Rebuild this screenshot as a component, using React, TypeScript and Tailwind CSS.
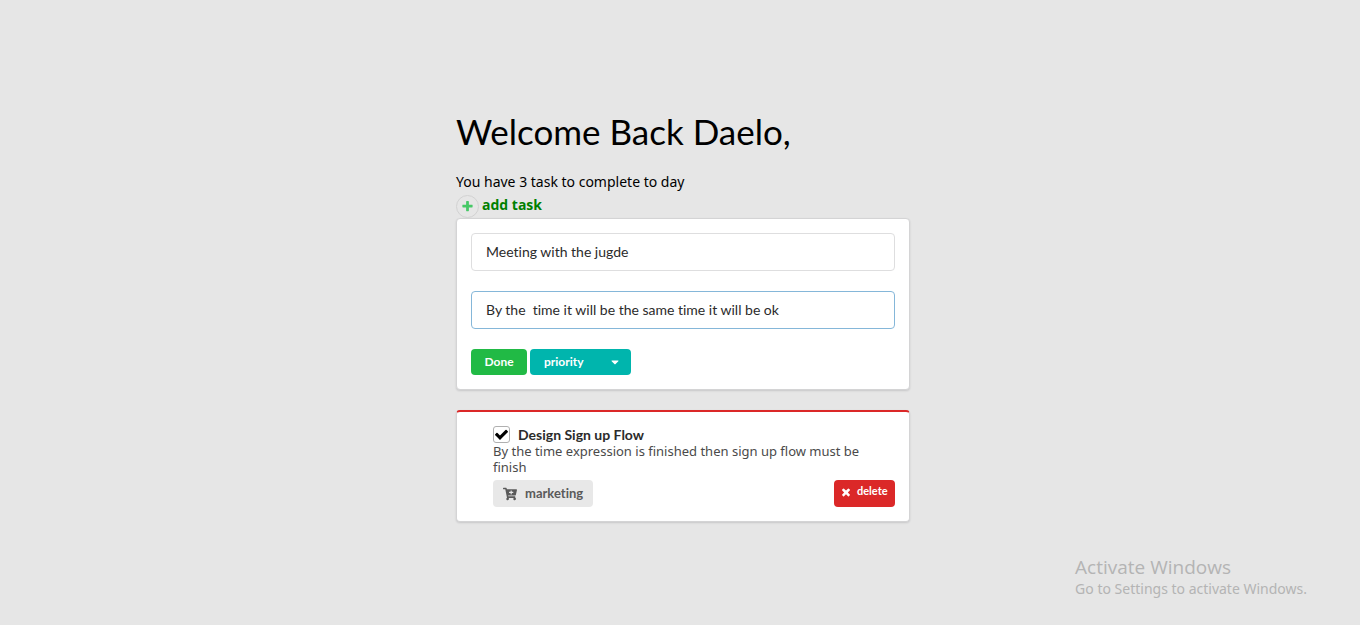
import { useState } from "react";
import { FaCartPlus, FaCaretDown } from "react-icons/fa";

const lato = "font-['Lato','Liberation_Sans',sans-serif] [font-variant-ligatures:none]";
const sans = "font-['Open_Sans','Noto_Sans',sans-serif]";
const noto = "font-['Noto_Sans','Open_Sans',sans-serif]";
const card = "w-full rounded border border-[#d4d4d5] bg-white shadow-[0_1px_2px_0_rgba(34,36,38,0.15)]";
const field =
  "block h-[38px] w-full rounded border bg-white px-3.5 pb-0.5 text-sm text-[#2b2b2b] outline-none focus:border-[#85b7d9]";

const icons = {
  plus: "M1600 736v192q0 40-28 68t-68 28h-416v416q0 40-28 68t-68 28h-192q-40 0-68-28t-28-68v-416h-416q-40 0-68-28t-28-68v-192q0-40 28-68t68-28h416v-416q0-40 28-68t68-28h192q40 0 68 28t28 68v416h416q40 0 68 28t28 68z",
  check:
    "M1671 566q0 40-28 68l-724 724-136 136q-28 28-68 28t-68-28l-136-136-362-362q-28-28-28-68t28-68l136-136q28-28 68-28t68 28l294 295 656-657q28-28 68-28t68 28l136 136q28 28 28 68z",
  times:
    "M1490 1322q0 40-28 68l-136 136q-28 28-68 28t-68-28l-294-294-294 294q-28 28-68 28t-68-28l-136-136q-28-28-28-68t28-68l294-294-294-294q-28-28-28-68t28-68l136-136q28-28 68-28t68 28l294 294 294-294q28-28 68-28t68 28l136 136q28 28 28 68t-28 68l-294 294 294 294q28 28 28 68z",
};

function Icon({ name, className }: { name: keyof typeof icons; className: string }) {
  return (
    <svg viewBox="0 0 1792 1792" fill="currentColor" className={className} aria-hidden="true">
      <path d={icons[name]} />
    </svg>
  );
}

export default function App() {
  const [title, setTitle] = useState("Meeting with the jugde");
  const [details, setDetails] = useState("By the  time it will be the same time it will be ok");
  const [done, setDone] = useState(true);

  return (
    <div className={`flex min-h-screen flex-col bg-[#e6e6e6] text-black ${lato}`}>
      <main className="w-full grow pl-1.5 pt-[110px]">
        <div className="mx-auto w-full max-w-[454px]">
          <h1 className="text-[35px] leading-[42px]">Welcome Back Daelo,</h1>
          <p className={`mt-[18px] text-sm leading-6 ${noto}`}>You have 3 task to complete to day</p>
          <button
            type="button"
            className={`flex h-6 items-center gap-[3px] text-sm font-bold text-[#008000] ${sans}`}
          >
            <span className="flex size-[23px] items-center justify-center rounded-full border border-[#d2d2d2]">
              <Icon name="plus" className="size-[13px] text-[#46c866]" />
            </span>
            <span className="pb-0.5">add task</span>
          </button>

          <form className={`${card} p-3.5`} onSubmit={(e) => e.preventDefault()}>
            <input
              aria-label="Task title"
              className={`${field} border-[#dededf]`}
              value={title}
              onChange={(e) => setTitle(e.target.value)}
            />
            <input
              aria-label="Task description"
              className={`${field} mt-5 border-[#85b7d9]`}
              value={details}
              onChange={(e) => setDetails(e.target.value)}
            />
            <div className="mt-5 flex gap-[3px]">
              <button type="submit" className="h-[26px] w-14 rounded bg-[#21ba45] text-xs font-bold text-white">
                Done
              </button>
              <div className="relative">
                <select
                  aria-label="Priority"
                  className="block h-[26px] w-[101px] appearance-none rounded bg-[#00b5ad] px-3.5 text-xs font-bold text-white"
                >
                  <option>priority</option>
                  <option>high</option>
                  <option>low</option>
                </select>
                <FaCaretDown
                  className="pointer-events-none absolute right-2.5 top-[7px] size-3 text-white"
                  aria-hidden="true"
                />
              </div>
            </div>
          </form>

          <section className={`${card} mt-5 border-t-2 border-t-[#db2828] p-3.5 pl-9`}>
            <label className="flex h-[17px] items-center gap-2 text-sm font-bold text-[#2b2b2b]">
              <span className="relative flex size-[17px] items-center justify-center">
                <input
                  type="checkbox"
                  checked={done}
                  onChange={(e) => setDone(e.target.checked)}
                  className="size-[17px] appearance-none rounded-[3px] border border-[#b0b0b0] bg-white"
                />
                {done && <Icon name="check" className="pointer-events-none absolute size-[15px] text-black" />}
              </span>
              Design Sign up Flow
            </label>
            <p className={`pr-4 text-[13px] leading-4 text-[#4a4a4a] ${noto}`}>
              By the time expression is finished then sign up flow must be finish
            </p>
            <div className="mt-[5px] flex justify-between">
              <button
                type="button"
                className="flex h-[27px] w-[100px] items-center gap-2 rounded bg-[#e8e8e8] pl-2.5 text-[13px] font-bold text-[#5a5a5a]"
              >
                <FaCartPlus className="size-3.5" aria-hidden="true" />
                marketing
              </button>
              <button
                type="button"
                className="flex h-[27px] w-[61px] items-center gap-[5px] rounded bg-[#db2828] pb-1 pl-1.5 text-[11px] font-bold text-white"
              >
                <Icon name="times" className="size-3" />
                delete
              </button>
            </div>
          </section>
        </div>
      </main>
      <aside className="mr-[53px] self-end pb-[26px] text-[#b4b4b4]">
        <p className={`text-[19px] leading-6 ${sans}`}>Activate Windows</p>
        <p className={`text-sm leading-5 ${noto}`}>Go to Settings to activate Windows.</p>
      </aside>
    </div>
  );
}
